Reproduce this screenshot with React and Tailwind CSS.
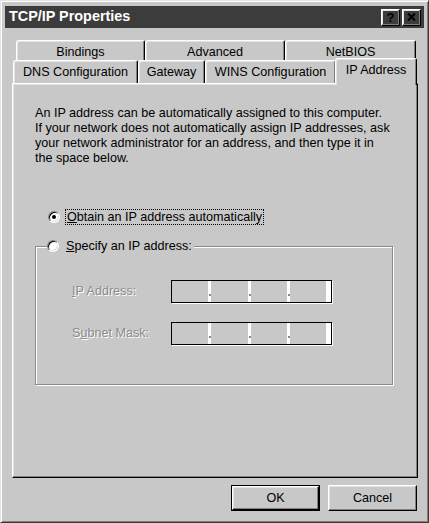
import React from 'react';

const bevel = 'border border-t-white border-l-white border-r-black border-b-black shadow-[inset_-1px_-1px_0_#808080,inset_1px_1px_0_#e2e2e2]';

function Radio({ checked }) {
  return (
    <span className="flex h-[12px] w-[12px] shrink-0 items-center justify-center rounded-full border border-t-[#808080] border-l-[#808080] border-r-white border-b-white bg-white shadow-[inset_1px_1px_0_#000,inset_-1px_-1px_0_#dcdcdc]">
      {checked && <span className="h-[4px] w-[4px] rounded-full bg-black" />}
    </span>
  );
}

function Tab({ label, width, selected, back }) {
  return (
    <div
      className={`flex items-center justify-center rounded-tl-[3px] rounded-tr-[2px] border border-b-0 border-t-white border-l-white border-r-black bg-[#c8c8c8] shadow-[inset_-1px_0_0_#808080,inset_1px_1px_0_#e2e2e2] ${
        selected ? 'relative z-10 -mb-[2px] h-[27px] pb-[3px]' : back ? 'h-full pt-[3px]' : 'h-full'
      }`}
      style={{ width }}
    >
      {label}
    </div>
  );
}

function IpField() {
  const segs = [36, 37, 36, 36];
  return (
    <div className="flex h-[23px] w-[161px] border border-black bg-[#c8c8c8] shadow-[1px_1px_0_#ffffff]">
      {segs.map((w, i) => (
        <React.Fragment key={i}>
          <div className="h-full" style={{ width: w }} />
          {i < 3 && (
            <div className="flex h-full w-[3px] flex-col items-center justify-end bg-white pb-[6px]">
              <span className="h-[2px] w-[2px] bg-[#8a8a8a]" />
            </div>
          )}
        </React.Fragment>
      ))}
      <div className="h-full flex-1 bg-white" />
    </div>
  );
}

const disabled = 'text-[#8c8c8c] [text-shadow:1px_1px_0_#ffffff]';

export default function App() {
  return (
    <div className="flex h-[523px] w-[429px] flex-col border border-t-[#e4e4e4] border-l-[#e4e4e4] border-r-[#3a3a3a] border-b-[#3a3a3a] bg-[#c8c8c8] p-[4px] font-['Liberation_Sans',Arial,sans-serif] text-[12.6px] text-black shadow-[inset_1px_1px_0_#ffffff,inset_-1px_-1px_0_#808080]">
      {/* title bar */}
      <div className="mt-[1px] flex h-[22px] items-center justify-between bg-[#3c3c3c] pl-[4px] pr-[3px]">
        <span className="text-[14.4px] font-bold text-white">TCP/IP Properties</span>
        <div className="flex gap-[2px]">
          <div className={`flex h-[17px] w-[19px] items-center justify-center text-[13px] font-bold leading-none ${bevel}`}>?</div>
          <div className={`flex h-[17px] w-[19px] items-center justify-center ${bevel}`}>
            <svg width="9" height="8" viewBox="0 0 9 8">
              <path d="M1 0.5 L8 7.5 M8 0.5 L1 7.5" stroke="#000" strokeWidth="2" />
            </svg>
          </div>
        </div>
      </div>

      {/* tabs + panel */}
      <div className="ml-[7px] mt-[12px] flex w-[406px] flex-col">
        <div className="flex h-[20px] pl-[4px] leading-none">
          <Tab label="Bindings" width={129} back />
          <Tab label="Advanced" width={140} back />
          <Tab label="NetBIOS" width={131} back />
        </div>
        <div className="flex h-[23px] items-end pl-[1px] leading-none">
          <Tab label="DNS Configuration" width={125} />
          <Tab label="Gateway" width={67} />
          <Tab label="WINS Configuration" width={131} />
          <div className="-ml-[1px]">
            <Tab label="IP Address" width={82} selected />
          </div>
        </div>
        <div className="flex h-[395px] flex-col border border-t-white border-l-white border-r-black border-b-black shadow-[inset_-1px_-1px_0_#808080,inset_1px_1px_0_#e2e2e2]">
          <p className="ml-[22px] mt-[22px] leading-[15px]">
            An IP address can be automatically assigned to this computer.
            <br />
            If your network does not automatically assign IP addresses, ask
            <br />
            your network administrator for an address, and then type it in
            <br />
            the space below.
          </p>

          <div className="ml-[35px] mt-[43px] flex h-[16px] items-center gap-[6px]">
            <Radio checked />
            <span className="px-[1px] leading-[14px] outline outline-1 outline-dotted outline-black">
              <span className="underline">O</span>btain an IP address automatically
            </span>
          </div>

          <div className="ml-[22px] mt-[21px] flex w-[358px] flex-col border border-[#8a8a8a] pb-[39px] shadow-[inset_1px_1px_0_#ffffff,1px_1px_0_#ffffff]">
            <div className="-mt-[9px] ml-[11px] flex h-[16px] items-center gap-[7px] self-start bg-[#c8c8c8] pr-[2px]">
              <Radio />
              <span>
                <span className="underline">S</span>pecify an IP address:
              </span>
            </div>
            <div className="ml-[36px] mt-[26px] flex items-center">
              <span className={`w-[99px] ${disabled}`}>
                <span className="underline">I</span>P Address:
              </span>
              <IpField />
            </div>
            <div className="ml-[36px] mt-[19px] flex items-center">
              <span className={`w-[99px] ${disabled}`}>
                S<span className="underline">u</span>bnet Mask:
              </span>
              <IpField />
            </div>
          </div>
        </div>

        {/* buttons */}
        <div className="mt-[7px] flex justify-end gap-[8px] pr-[1px]">
          <button className="flex h-[26px] w-[89px] items-center justify-center border border-black">
            <span className={`flex h-full w-full items-center justify-center ${bevel}`}>OK</span>
          </button>
          <button className={`flex h-[26px] w-[89px] items-center justify-center ${bevel}`}>Cancel</button>
        </div>
      </div>
    </div>
  );
}
